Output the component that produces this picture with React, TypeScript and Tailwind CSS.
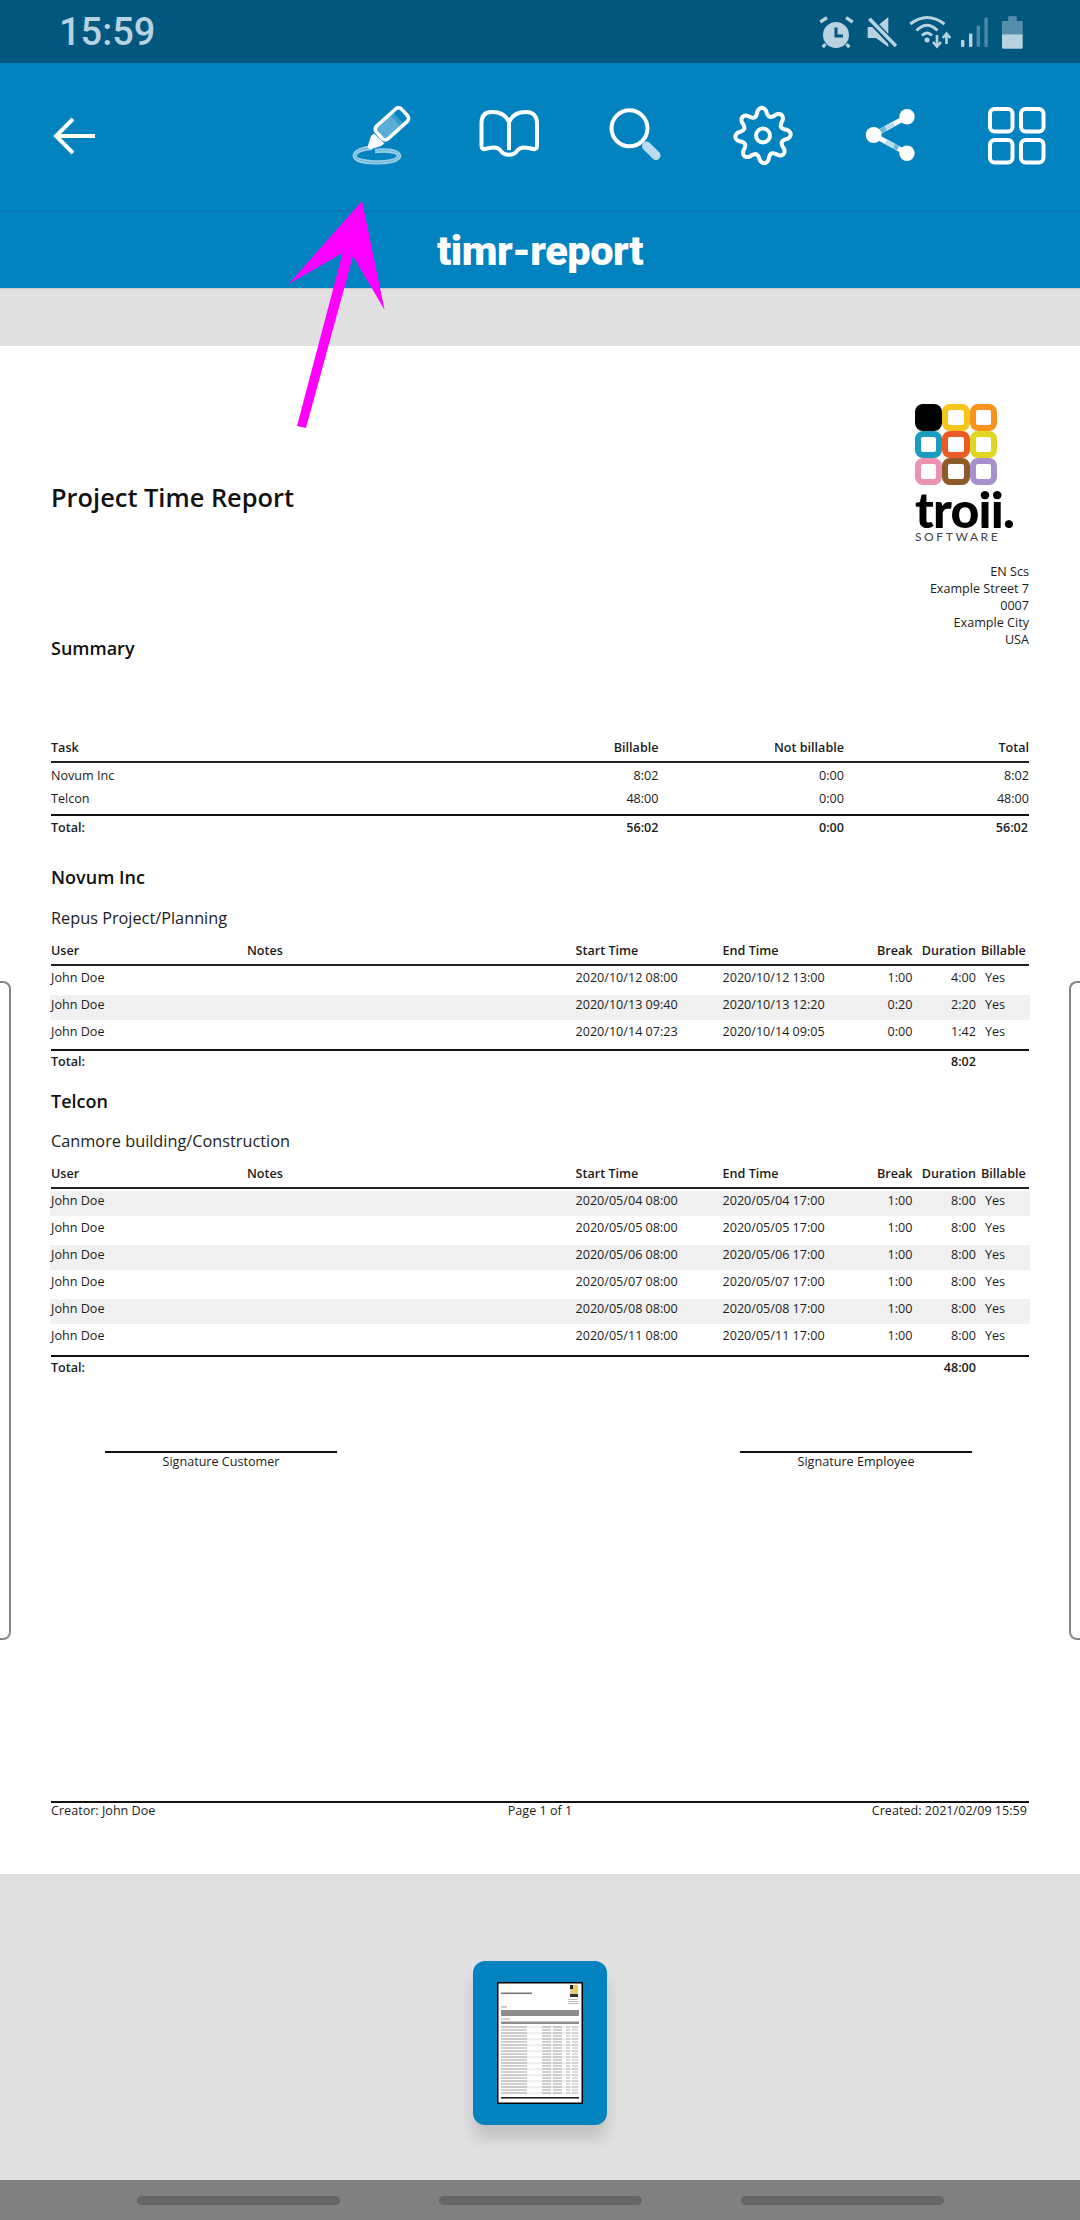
import type { ReactNode } from "react";

const FG = "#b9d2df";

const gearPath = (() => {
  const pts: string[] = [];
  for (let i = 0; i < 240; i++) {
    const t = (i / 240) * Math.PI * 2;
    const wave = Math.cos(8 * t + Math.PI / 8);
    const r = 23.8 + 3.9 * Math.sign(wave) * Math.pow(Math.abs(wave), 0.75);
    pts.push(`${(32 + r * Math.cos(t)).toFixed(2)} ${(31.5 + r * Math.sin(t)).toFixed(2)}`);
  }
  return "M" + pts.join("L") + "Z";
})();

function StatusIcons() {
  return (
    <div className="ml-auto flex items-center pr-[56px]">
      <svg width="36" height="36" viewBox="0 0 36 36" className="-mr-[2px]">
        <circle cx="18" cy="21" r="13" fill={FG} />
        <path d="M18 13.5V22H25" stroke="#02577f" strokeWidth="3" fill="none" />
        <path d="M2.3 8L9 3.7M28 3.7L34.7 8M7.5 30L4.7 33.3M28.5 30L31.3 33.3" stroke={FG} strokeWidth="3.3" fill="none" />
      </svg>
      <svg width="30" height="36" viewBox="0 0 30 36" className="ml-[15px]">
        <path d="M0.7 13H9L21.3 3V33L9 24H0.7Z" fill={FG} />
        <path d="M0 2.5L30 34" stroke="#02577f" strokeWidth="7" />
        <path d="M2.3 4.7L29 32" stroke={FG} strokeWidth="3.5" />
      </svg>
      <svg width="44" height="36" viewBox="0 0 44 36" className="ml-[11px]">
        <path d="M2.3 10Q19 -3 36.5 10M8.5 16.5Q19 6 29.5 16.5M14 21.5Q19 16.5 24 21.5" stroke={FG} strokeWidth="3" fill="none" />
        <circle cx="19" cy="26" r="2.5" fill={FG} />
        <path d="M29 21V32M25 28L29 32.5L33 28M38.5 30V20M34.8 24L38.5 19.5L42.2 24" stroke={FG} strokeWidth="2.6" fill="none" />
      </svg>
      <svg width="30" height="36" viewBox="0 0 30 36" className="ml-[8px]">
        <rect x="1" y="26" width="3.4" height="7" rx="1" fill={FG} />
        <rect x="9" y="19.5" width="3.4" height="13.5" rx="1" fill={FG} />
        <rect x="16.6" y="11.5" width="3.4" height="21.5" rx="1" fill={FG} opacity="0.4" />
        <rect x="24.4" y="3.5" width="3.4" height="29.5" rx="1" fill={FG} opacity="0.4" />
      </svg>
      <svg width="22" height="36" viewBox="0 0 22 36" className="ml-[12px]">
        <path d="M6.3 2.3H14.7V7H20.7V20.3H0V7H6.3Z" fill={FG} opacity="0.45" />
        <path d="M0 20.3H20.7V33.5Q20.7 34.7 19.5 34.7H1.2Q0 34.7 0 33.5Z" fill={FG} />
      </svg>
    </div>
  );
}

function Cell({ children }: { children: ReactNode }) {
  return <div className="flex w-[127px] justify-center">{children}</div>;
}

function Toolbar() {
  return (
    <div className="flex h-[150px] shrink-0 items-center border-b-[3px] border-[#037bb6] bg-[#0382c0] pb-px">
      <svg width="64" height="64" viewBox="0 0 64 64" className="ml-[42px]">
        <path d="M53 32H14M31 15L14 32L31 49" stroke="#fff" strokeWidth="4" fill="none" />
      </svg>
      <div className="ml-auto flex">
        <Cell>
          <svg width="64" height="64" viewBox="0 0 64 64">
            <path d="M25 47C45 45 52 50 48 54C42 60 8 60 5 53C3 47 15 44 22 44" stroke="#fff" strokeOpacity="0.6" strokeWidth="4.4" fill="none" />
            <path d="M25 47C45 45 52 50 48 54C42 60 8 60 5 53C3 47 15 44 22 44" stroke="#0382c0" strokeOpacity="0.35" strokeWidth="1" fill="none" />
            <g transform="rotate(-42 41.7 20)">
              <rect x="25" y="11.5" width="34" height="17" rx="4" stroke="#fff" strokeWidth="3.6" fill="none" />
              <rect x="26.7" y="13.2" width="20" height="13.6" fill="#fff" fillOpacity="0.35" />
              <rect x="46.7" y="13.2" width="4" height="13.6" fill="#fff" fillOpacity="0.2" />
            </g>
            <path d="M21 32L24 29.5L34.5 39.5L31 42L20 45.5L17.5 43Z" fill="#fff" />
          </svg>
        </Cell>
        <Cell>
          <svg width="64" height="64" viewBox="0 0 64 64">
            <path d="M32 18C29 11 22 8 15 8C8 8 4.5 12 4.5 19V42C4.5 44.5 6 45.5 8 45C14 43 21 42.5 24 47C27 52 37 52 40 47C43 42.5 50 43 56 45C58 45.5 60 44.5 60 42V19C60 12 56 8 49 8C42 8 35 11 32 18V46" stroke="#fff" strokeWidth="4" fill="none" strokeLinejoin="round" />
          </svg>
        </Cell>
        <Cell>
          <svg width="64" height="64" viewBox="0 0 64 64">
            <circle cx="25.5" cy="24.3" r="18" stroke="#fff" strokeWidth="4" fill="none" />
            <path d="M42.5 42L52 51.5" stroke="#b9ddef" strokeWidth="9" strokeLinecap="round" />
          </svg>
        </Cell>
        <Cell>
          <svg width="64" height="64" viewBox="0 0 64 64">
            <path d={gearPath} stroke="#fff" strokeWidth="4" fill="none" strokeLinejoin="round" />
            <circle cx="32" cy="31.5" r="7" stroke="#fff" strokeWidth="4" fill="none" />
          </svg>
        </Cell>
        <Cell>
          <svg width="64" height="64" viewBox="0 0 64 64">
            <path d="M15.7 31L49 12.7M15.7 31L49 49.3" stroke="#fff" strokeWidth="5" />
            <path d="M22 27.5L28 24.2" stroke="#6fb6dc" strokeWidth="5" />
            <path d="M28 24.2L36 19.8" stroke="#b9ddef" strokeWidth="5" />
            <path d="M28 37.6L36 42" stroke="#b9ddef" strokeWidth="5" />
            <path d="M36 42L40 44.2" stroke="#6fb6dc" strokeWidth="5" />
            <circle cx="15.7" cy="31" r="8" fill="#fff" />
            <circle cx="49" cy="12.7" r="7.7" fill="#fff" />
            <circle cx="49" cy="49.3" r="7.7" fill="#fff" />
          </svg>
        </Cell>
        <Cell>
          <svg width="64" height="64" viewBox="0 0 64 64">
            <rect x="5" y="5" width="22.5" height="22.5" rx="4.5" stroke="#fff" strokeWidth="4" fill="none" />
            <rect x="36" y="5" width="22.5" height="22.5" rx="4.5" stroke="#fff" strokeWidth="4" fill="none" />
            <rect x="5" y="36" width="22.5" height="22.5" rx="4.5" stroke="#fff" strokeWidth="4" fill="none" />
            <rect x="36" y="36" width="22.5" height="22.5" rx="4.5" stroke="#fff" strokeWidth="4" fill="none" />
          </svg>
        </Cell>
      </div>
    </div>
  );
}

function Logo() {
  return (
    <div className="flex w-[114px] flex-col self-start">
      <div className="grid w-[82px] grid-cols-3">
        <div className="h-[27px] rounded-[8px] bg-black" />
        <div className="h-[27px] rounded-[8px] border-[6.5px] border-[#f6c51b]" />
        <div className="h-[27px] rounded-[8px] border-[6.5px] border-[#f7941e]" />
        <div className="h-[27px] rounded-[8px] border-[6.5px] border-[#1a9cc0]" />
        <div className="h-[27px] rounded-[8px] border-[6.5px] border-[#ea5b25]" />
        <div className="h-[27px] rounded-[8px] border-[6.5px] border-[#e0d520]" />
        <div className="h-[27px] rounded-[8px] border-[6.5px] border-[#ea92b2]" />
        <div className="h-[27px] rounded-[8px] border-[6.5px] border-[#8f5a2a]" />
        <div className="h-[27px] rounded-[8px] border-[6.5px] border-[#a890cf]" />
      </div>
      <div className="mt-[3px] h-[40px] font-['Lato'] text-[50px] leading-[42px] font-black tracking-[-0.8px] text-black">troii.</div>
      <div className="mt-[3px] font-['Lato'] text-[12px] leading-[12px] tracking-[2.6px] text-[#444]">SOFTWARE</div>
    </div>
  );
}

type R = { s: string; e: string; b: string; d: string };

const COLS = "grid grid-cols-[196px_328.5px_147px_190px_63.5px_1fr]";
const SUM = "grid grid-cols-[422px_185.5px_185.5px_185px]";

function Table({ rows, total, firstShaded, rowsTop, lineTop }: { rows: R[]; total: string; firstShaded: boolean; rowsTop: string; lineTop: string }) {
  return (
    <div>
      <div className={`${COLS} box-content h-[26px] items-center border-b-2 border-[#222] font-semibold`}>
        <div>User</div>
        <div>Notes</div>
        <div>Start Time</div>
        <div className="flex justify-between">
          <span>End Time</span>
          <span>Break</span>
        </div>
        <div className="text-right">Duration</div>
        <div className="pl-[5px]">Billable</div>
      </div>
      <div className={rowsTop}>
        {rows.map((r, i) => (
          <div key={r.s} className={`${COLS} -mx-px mb-[2px] h-[25px] items-center px-px pb-[5px] ${(i % 2 === 0) === firstShaded ? "bg-[#f0f0f0]" : ""}`}>
            <div>John Doe</div>
            <div />
            <div>{r.s}</div>
            <div className="flex justify-between">
              <span>{r.e}</span>
              <span>{r.b}</span>
            </div>
            <div className="text-right">{r.d}</div>
            <div className="pl-[9px]">Yes</div>
          </div>
        ))}
      </div>
      <div className={`${COLS} ${lineTop} box-content h-[23px] items-center border-t-2 border-[#111] font-semibold`}>
        <div>Total:</div>
        <div />
        <div />
        <div />
        <div className="text-right">{total}</div>
        <div />
      </div>
    </div>
  );
}

const novum: R[] = [
  { s: "2020/10/12 08:00", e: "2020/10/12 13:00", b: "1:00", d: "4:00" },
  { s: "2020/10/13 09:40", e: "2020/10/13 12:20", b: "0:20", d: "2:20" },
  { s: "2020/10/14 07:23", e: "2020/10/14 09:05", b: "0:00", d: "1:42" },
];
const telcon: R[] = ["04", "05", "06", "07", "08", "11"].map((d) => ({
  s: `2020/05/${d} 08:00`,
  e: `2020/05/${d} 17:00`,
  b: "1:00",
  d: "8:00",
}));

const thumbRows = [44, 47, 50, 53, 56, 59, 62, 65, 68, 71, 74, 77, 80, 83, 86, 89, 92, 95, 98, 101, 104, 107, 110];

function Thumb() {
  return (
    <svg width="86" height="122" viewBox="0 0 86 122" className="block">
      <rect x="0.75" y="0.75" width="84.5" height="120.5" fill="#fff" stroke="#000" strokeWidth="1.5" />
      <g className="blur-[0.4px]">
        <rect x="4" y="10.5" width="31" height="1.6" fill="#777" />
        <rect x="73" y="3" width="8" height="12" fill="#d9c9a0" />
        <rect x="73" y="3" width="3" height="4" fill="#222" />
        <rect x="77" y="3" width="4" height="8" fill="#f0c95a" />
        <rect x="73" y="12" width="8" height="3" fill="#333" />
        <rect x="71" y="17" width="10" height="1" fill="#bbb" />
        <rect x="71" y="19" width="10" height="1" fill="#bbb" />
        <rect x="71" y="21" width="10" height="1" fill="#bbb" />
        <rect x="4" y="24.5" width="6" height="1" fill="#999" />
        <rect x="4" y="28" width="78" height="6" fill="#8c8c8c" />
        <rect x="4" y="36.5" width="9" height="1" fill="#aaa" />
        <rect x="4" y="39.5" width="78" height="2.5" fill="#8c8c8c" />
        {thumbRows.map((y) => (
          <g key={y}>
            <rect x="4" y={y} width="78" height="2.4" fill={y % 2 === 0 ? "#efefef" : "#fff"} />
            <rect x="4" y={y + 0.4} width="15" height="1.2" fill="#b4b4b4" />
            <rect x="19" y={y + 0.4} width="11" height="1.2" fill="#b4b4b4" />
            <rect x="45" y={y + 0.4} width="9" height="1.2" fill="#b0b0b0" />
            <rect x="56" y={y + 0.4} width="9" height="1.2" fill="#b0b0b0" />
            <rect x="69" y={y + 0.4} width="4" height="1.2" fill="#c0c0c0" />
            <rect x="75" y={y + 0.4} width="6" height="1.2" fill="#c0c0c0" />
          </g>
        ))}
        <rect x="4" y="115" width="78" height="1.6" fill="#222" />
      </g>
    </svg>
  );
}

export default function App() {
  return (
    <div className="relative flex h-[2220px] w-[1080px] flex-col overflow-hidden bg-[#e0e0e0] font-['Open_Sans',sans-serif] text-[12.6px] text-[#1c1c1c]">
      <div className="flex h-[63px] shrink-0 items-center bg-[#02577f]">
        <span className="pt-[2px] pl-[59px] font-['Roboto'] text-[38px] font-medium text-[#b9d2df]">15:59</span>
        <StatusIcons />
      </div>
      <Toolbar />
      <div className="flex h-[76px] shrink-0 items-center justify-center border-b border-[#c9c9c9] bg-[#0382c0] pt-px font-['Roboto'] text-[41.5px] font-black tracking-[-0.5px] text-white">
        timr-report
      </div>
      <div className="h-[57px] shrink-0" />

      <div className="h-[1528px] shrink-0 bg-white px-[51px] pt-[58px]">
        <div className="flex items-start justify-between">
          <div>
            <div className="mt-[76px] text-[25.4px] leading-[34px] font-semibold text-[#111]">Project Time Report</div>
            <div className="mt-[122px] text-[18px] leading-[24px] font-semibold text-[#111]">Summary</div>
          </div>
          <div className="flex flex-col items-end">
            <Logo />
            <div className="mt-[20px] text-right leading-[17px]">
              <div>EN Scs</div>
              <div>Example Street 7</div>
              <div>0007</div>
              <div>Example City</div>
              <div>USA</div>
            </div>
          </div>
        </div>

        <div className={`${SUM} mt-[76px] box-content h-[25px] items-center border-b-2 border-[#222] font-semibold`}>
          <div>Task</div>
          <div className="text-right">Billable</div>
          <div className="text-right">Not billable</div>
          <div className="text-right">Total</div>
        </div>
        <div className="mt-[2px]">
          {[
            ["Novum Inc", "8:02", "0:00", "8:02"],
            ["Telcon", "48:00", "0:00", "48:00"],
          ].map((r) => (
            <div key={r[0]} className={`${SUM} h-[23px] items-center`}>
              <div>{r[0]}</div>
              <div className="text-right">{r[1]}</div>
              <div className="text-right">{r[2]}</div>
              <div className="text-right">{r[3]}</div>
            </div>
          ))}
        </div>
        <div className={`${SUM} mt-[3px] box-content h-[25px] items-center border-t-2 border-[#111] font-semibold`}>
          <div>Total:</div>
          <div className="text-right">56:02</div>
          <div className="text-right">0:00</div>
          <div className="pr-px text-right">56:02</div>
        </div>

        <div className="mt-[23px] text-[18px] leading-[26px] font-semibold text-[#111]">Novum Inc</div>
        <div className="mt-[16px] mb-[8px] text-[16.3px] leading-[24px]">Repus Project/Planning</div>
        <Table rows={novum} total="8:02" firstShaded={false} rowsTop="mt-[2px]" lineTop="mt-[2px]" />

        <div className="mt-[14px] text-[18px] leading-[26px] font-semibold text-[#111]">Telcon</div>
        <div className="mt-[15px] mb-[8px] text-[16.3px] leading-[24px]">Canmore building/Construction</div>
        <Table rows={telcon} total="48:00" firstShaded={true} rowsTop="mt-[2px]" lineTop="mt-[4px]" />

        <div className="mt-[71px] flex justify-between pr-[57px] pl-[54px]">
          <div className="w-[232px] border-t-2 border-[#111] text-center leading-[18px]">Signature Customer</div>
          <div className="w-[232px] border-t-2 border-[#111] text-center leading-[18px]">Signature Employee</div>
        </div>

        <div className="mt-[330px] grid grid-cols-3 border-t-2 border-[#111] leading-[16px]">
          <div>Creator: John Doe</div>
          <div className="text-center">Page 1 of 1</div>
          <div className="pr-[2px] text-right">Created: 2021/02/09 15:59</div>
        </div>
      </div>

      <div className="absolute top-[981px] left-0 h-[659px] w-[11px] rounded-r-[8px] border-[2.5px] border-l-0 border-[#868686]" />
      <div className="absolute top-[981px] right-0 h-[659px] w-[11px] rounded-l-[8px] border-[2.5px] border-r-0 border-[#868686]" />

      <div className="flex flex-1 justify-center pt-[87px]">
        <div className="flex h-[164px] w-[134px] items-start justify-center rounded-[12px] bg-[#0382c0] pt-[21px] shadow-[0_14px_14px_rgba(0,0,0,0.13)]">
          <Thumb />
        </div>
      </div>

      <div className="flex h-[40px] shrink-0 items-center justify-center gap-[99px] bg-[#808080]">
        <div className="h-[9px] w-[203px] rounded-full bg-[#666]" />
        <div className="h-[9px] w-[203px] rounded-full bg-[#666]" />
        <div className="h-[9px] w-[203px] rounded-full bg-[#666]" />
      </div>

      <svg width="110" height="240" viewBox="0 0 110 240" className="absolute top-[195px] left-[280px]">
        <polygon points="82,6 8.6,89 62.6,58 17,231 26,233 73,61 104.6,115" fill="#ff00ff" />
      </svg>
    </div>
  );
}
